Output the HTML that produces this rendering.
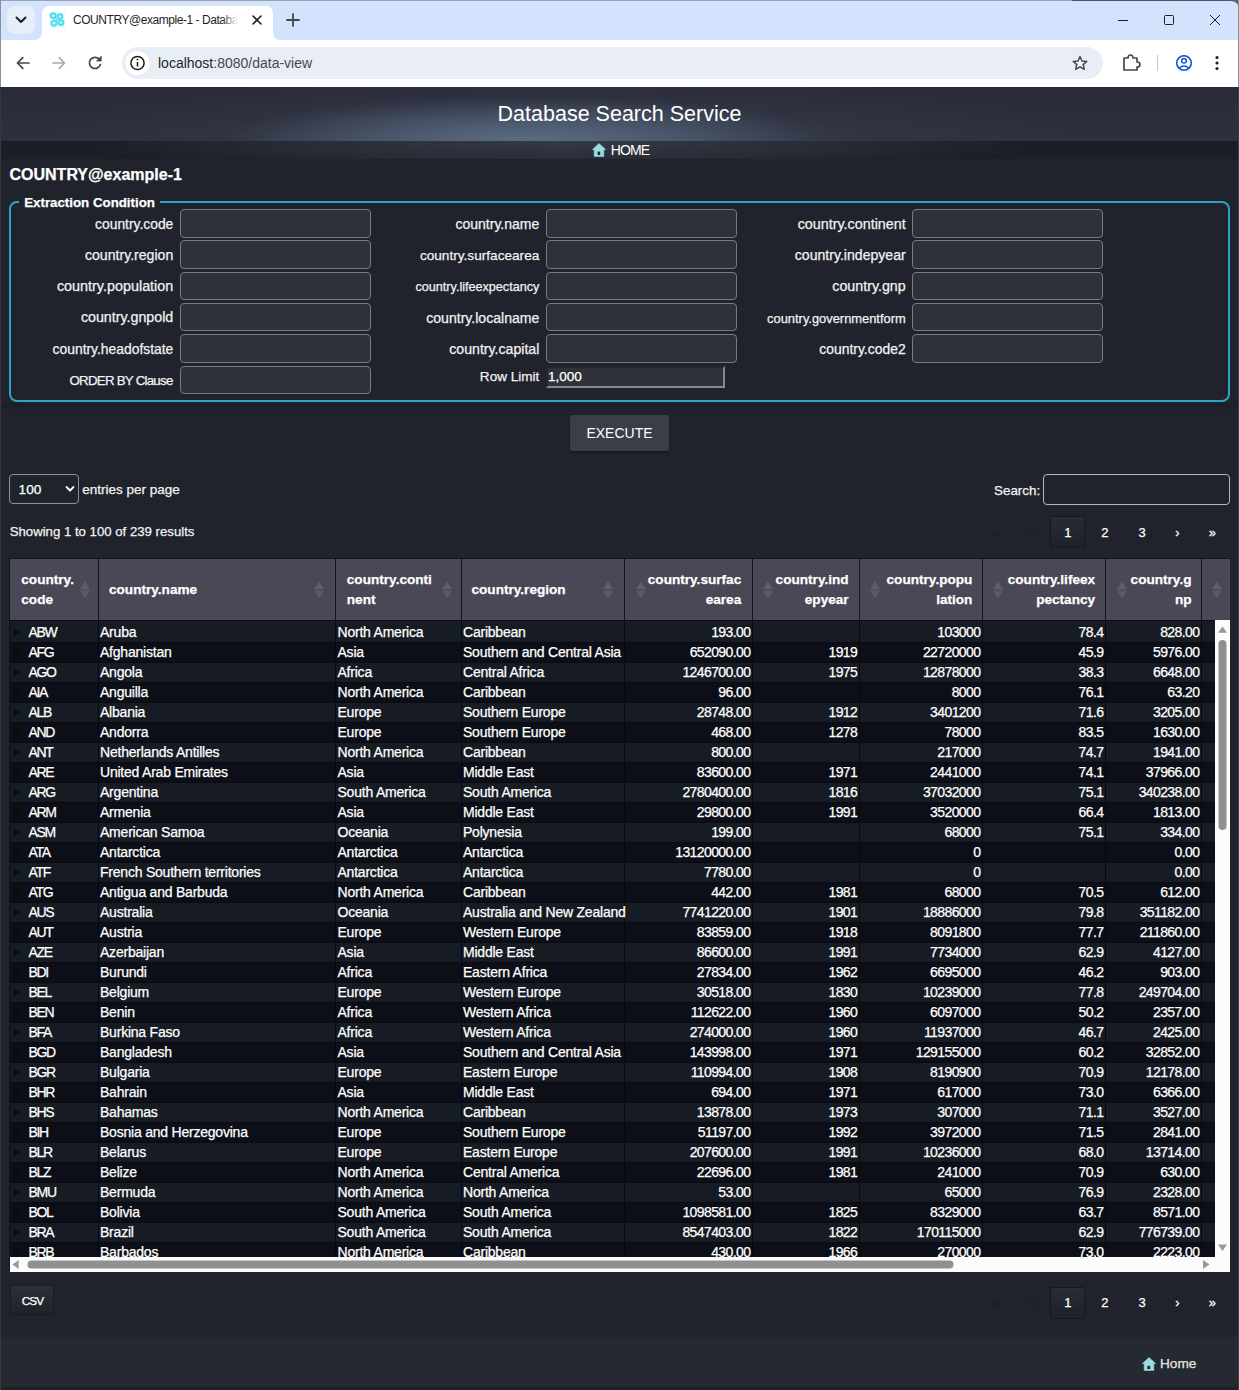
<!DOCTYPE html>
<html><head><meta charset="utf-8"><title>COUNTRY@example-1</title>
<style>
html,body{margin:0;padding:0;}
body{width:1239px;height:1390px;overflow:hidden;position:relative;background:#20232c;font-family:"Liberation Sans", sans-serif;}
.t{position:absolute;white-space:nowrap;-webkit-text-stroke:0.25px currentColor;}
.b{position:absolute;box-sizing:border-box;}
svg{position:absolute;overflow:visible;}
</style></head><body>
<div class="b" style="left:0px;top:0px;width:1239px;height:87px;background:#ffffff;"></div>
<div class="b" style="left:0px;top:0px;width:1239px;height:40px;background:#d3e3fd;"></div>
<div class="b" style="left:0px;top:0px;width:1239px;height:1px;background:#9aa3ad;"></div>
<div class="b" style="left:1072px;top:0px;width:167px;height:1px;background:#4a5568;"></div>
<svg style="left:1229px;top:0" width="10" height="10" viewBox="0 0 10 10"><path d="M0 0 L10 0 L10 10 Q10 1 1 1 Z" fill="#5a6577"/></svg>
<div class="b" style="left:0px;top:0px;width:1px;height:87px;background:#8a9098;"></div>
<div class="b" style="left:0px;top:87px;width:1.3px;height:1303px;background:#34373d;"></div>
<div class="b" style="left:1238px;top:0px;width:1px;height:87px;background:#8a9098;"></div>
<div class="b" style="left:1237.5px;top:87px;width:1.5px;height:1303px;background:#3a3d44;"></div>
<div class="b" style="left:7px;top:6px;width:28px;height:28px;background:#e8eef9;border-radius:8px;"></div>
<svg style="left:0;top:0" width="300" height="40" viewBox="0 0 300 40"><path d="M16.5 17.5 L21 22 L25.5 17.5" fill="none" stroke="#1f1f1f" stroke-width="2" stroke-linecap="round" stroke-linejoin="round"/></svg>
<svg style="left:0;top:0" width="320" height="41" viewBox="0 0 320 41"><path d="M34 40 Q42 40 42 32 L42 14 Q42 6 50 6 L265 6 Q273 6 273 14 L273 32 Q273 40 281 40 Z" fill="#ffffff"/></svg>
<svg style="left:49px;top:12px" width="16" height="16" viewBox="0 0 16 16"><rect x="0" y="0" width="16" height="16" fill="#dff6fb" opacity="0.6"/><circle cx="4.2" cy="3.8" r="2.4" fill="none" stroke="#4fdcf0" stroke-width="2.2"/><circle cx="11" cy="4.6" r="2.3" fill="none" stroke="#4fdcf0" stroke-width="2.2"/><circle cx="5" cy="11.2" r="2.5" fill="none" stroke="#4fdcf0" stroke-width="2.2"/><circle cx="12" cy="10.6" r="2.3" fill="none" stroke="#4fdcf0" stroke-width="2.2"/><path d="M6.5 6 L9 8.5" stroke="#4fdcf0" stroke-width="1.2"/></svg>
<div class="t" style="top:12.44px;height:16px;line-height:16px;font-size:12px;color:#1f1f1f;left:73.00px;-webkit-text-stroke:0;letter-spacing:-0.45px;">COUNTRY@example-1 - Databa</div>
<div class="b" style="left:222px;top:10px;width:20px;height:22px;background:linear-gradient(90deg,rgba(255,255,255,0),#fff 80%);"></div>
<svg style="left:0;top:0" width="320" height="40" viewBox="0 0 320 40"><path d="M253 16 L261 24 M261 16 L253 24" stroke="#1f1f1f" stroke-width="1.6" stroke-linecap="round"/><path d="M293 14 L293 26 M287 20 L299 20" stroke="#474747" stroke-width="1.8" stroke-linecap="round"/></svg>
<svg style="left:1100px;top:0" width="139" height="40" viewBox="1100 0 139 40"><path d="M1118 20.5 L1128 20.5" stroke="#1f1f1f" stroke-width="1"/><rect x="1164.5" y="15.5" width="9" height="9" rx="1" fill="none" stroke="#1f1f1f" stroke-width="1"/><path d="M1210 15 L1220 25 M1220 15 L1210 25" stroke="#1f1f1f" stroke-width="1"/></svg>
<div class="b" style="left:122px;top:47px;width:981px;height:32px;background:#e9eef6;border-radius:16px;"></div>
<svg style="left:0;top:40px" width="1239" height="47" viewBox="0 40 1239 47"><path d="M29 63 L17.5 63 M22.8 57.6 L17.4 63 L22.8 68.4" fill="none" stroke="#474747" stroke-width="1.7" stroke-linecap="round" stroke-linejoin="round"/><path d="M53 63 L64.5 63 M59.2 57.6 L64.6 63 L59.2 68.4" fill="none" stroke="#ababab" stroke-width="1.7" stroke-linecap="round" stroke-linejoin="round"/><path d="M99.6 59.6 A5.6 5.6 0 1 0 100.4 64.6" fill="none" stroke="#474747" stroke-width="1.7" stroke-linecap="round"/><path d="M101.2 56.3 L101.2 61 L96.6 61 Z" fill="#474747" stroke="#474747" stroke-width="0.8" stroke-linejoin="round"/><circle cx="137.5" cy="63" r="12" fill="#ffffff"/><circle cx="137.5" cy="63" r="6.6" fill="none" stroke="#1f1f1f" stroke-width="1.5"/><path d="M137.5 62 L137.5 66.5" stroke="#1f1f1f" stroke-width="1.6"/><circle cx="137.5" cy="59.6" r="0.95" fill="#1f1f1f"/><path d="M1080 56.5 L1082 61 L1086.8 61.4 L1083.2 64.6 L1084.3 69.3 L1080 66.8 L1075.7 69.3 L1076.8 64.6 L1073.2 61.4 L1078 61 Z" fill="none" stroke="#474747" stroke-width="1.5" stroke-linejoin="round"/><path d="M1124 58 L1128 58 Q1128 55 1130.5 55 Q1133 55 1133 58 L1137 58 L1137 62 Q1140 62 1140 64.5 Q1140 67 1137 67 L1137 70 L1124 70 Z" fill="none" stroke="#474747" stroke-width="1.7" stroke-linejoin="round"/><path d="M1157.5 55 L1157.5 71" stroke="#c7c7c7" stroke-width="1"/><circle cx="1184" cy="63" r="7.3" fill="none" stroke="#0b57d0" stroke-width="1.6"/><circle cx="1184" cy="60.8" r="2.3" fill="none" stroke="#0b57d0" stroke-width="1.5"/><path d="M1179.3 68.2 Q1184 63.8 1188.7 68.2" fill="none" stroke="#0b57d0" stroke-width="1.5"/><circle cx="1217" cy="57.5" r="1.6" fill="#1f1f1f"/><circle cx="1217" cy="63" r="1.6" fill="#1f1f1f"/><circle cx="1217" cy="68.5" r="1.6" fill="#1f1f1f"/></svg>
<div class="t" style="top:53.95px;height:18px;line-height:18px;font-size:14px;color:#fff;left:158.00px;-webkit-text-stroke:0;"><span style="color:#1f1f1f">localhost</span><span style="color:#474747">:8080/data-view</span></div>
<div class="b" style="left:1px;top:87px;width:1237px;height:1303px;background:#20232c;"></div>
<div class="b" style="left:1px;top:87px;width:1237px;height:54px;background:radial-gradient(ellipse 300px 45px at 520px 54px, rgba(100,120,145,0.75), rgba(100,120,145,0) 100%), radial-gradient(ellipse 520px 75px at 560px 58px, rgba(70,84,105,0.8), rgba(55,62,80,0.3) 60%, rgba(43,45,58,0) 100%), linear-gradient(180deg,#2a2b38,#2e303d);"></div>
<div class="t" style="top:100.05px;height:28px;line-height:28px;font-size:21.5px;color:#ffffff;left:319.50px;width:600px;text-align:center;-webkit-text-stroke:0;">Database Search Service</div>
<div class="b" style="left:1px;top:141px;width:1237px;height:18px;background:radial-gradient(ellipse 480px 36px at 560px 0px, #343a46, #282c36 55%, #1c1e26 100%);"></div>
<svg style="left:592px;top:143px" width="14" height="14" viewBox="0 0 14 14"><path d="M7 0.6 L13.6 6.6 L11.8 6.6 L11.8 13.4 L2.2 13.4 L2.2 6.6 L0.4 6.6 Z" fill="#9bdcdf" stroke="#9bdcdf" stroke-width="0.6" stroke-linejoin="round"/><rect x="5.6" y="8.6" width="2.6" height="3.4" fill="#1d2a33"/></svg>
<div class="t" style="top:141.15px;height:18px;line-height:18px;font-size:14px;color:#ffffff;left:610.70px;-webkit-text-stroke:0;letter-spacing:-0.9px;">HOME</div>
<div class="t" style="top:164.15px;height:21px;line-height:21px;font-size:16px;color:#ffffff;font-weight:700;left:9.50px;">COUNTRY@example-1</div>
<div class="b" style="left:9px;top:201px;width:1221px;height:201px;border:2px solid #2ba6c1;border-radius:8px;"></div>
<div class="b" style="left:19px;top:196px;width:141px;height:10px;background:#20232c;"></div>
<div class="t" style="top:193.69px;height:17px;line-height:17px;font-size:13.3px;color:#ffffff;font-weight:700;left:24.20px;">Extraction Condition</div>
<div class="t" style="top:215.30px;height:18px;line-height:18px;font-size:13.85840707964602px;color:#f2f2f2;right:1065.70px;text-align:right;">country.code</div>
<div class="b" style="left:180px;top:209.2px;width:191px;height:28.6px;background:#2e3139;border:1px solid #777b83;border-radius:4px;"></div>
<div class="t" style="top:246.40px;height:18px;line-height:18px;font-size:14.127708095781072px;color:#f2f2f2;right:1065.70px;text-align:right;">country.region</div>
<div class="b" style="left:180px;top:240.4px;width:191px;height:28.6px;background:#2e3139;border:1px solid #777b83;border-radius:4px;"></div>
<div class="t" style="top:277.01px;height:19px;line-height:19px;font-size:14.39506172839506px;color:#f2f2f2;right:1065.70px;text-align:right;">country.population</div>
<div class="b" style="left:180px;top:271.6px;width:191px;height:28.6px;background:#2e3139;border:1px solid #777b83;border-radius:4px;"></div>
<div class="t" style="top:308.36px;height:19px;line-height:19px;font-size:14.262114537444935px;color:#f2f2f2;right:1065.70px;text-align:right;">country.gnpold</div>
<div class="b" style="left:180px;top:302.9px;width:191px;height:28.6px;background:#2e3139;border:1px solid #777b83;border-radius:4px;"></div>
<div class="t" style="top:340.39px;height:18px;line-height:18px;font-size:13.862182116488924px;color:#f2f2f2;right:1065.70px;text-align:right;">country.headofstate</div>
<div class="b" style="left:180px;top:334.3px;width:191px;height:28.6px;background:#2e3139;border:1px solid #777b83;border-radius:4px;"></div>
<div class="t" style="top:372.29px;height:17px;line-height:17px;font-size:13.3px;color:#f2f2f2;right:1066.45px;text-align:right;letter-spacing:-0.75px;">ORDER BY Clause</div>
<div class="b" style="left:180px;top:365.5px;width:191px;height:28.6px;background:#2e3139;border:1px solid #777b83;border-radius:4px;"></div>
<div class="t" style="top:215.23px;height:18px;line-height:18px;font-size:14.033412887828163px;color:#f2f2f2;right:699.70px;text-align:right;">country.name</div>
<div class="b" style="left:546px;top:209.2px;width:191px;height:28.6px;background:#2e3139;border:1px solid #777b83;border-radius:4px;"></div>
<div class="t" style="top:246.57px;height:18px;line-height:18px;font-size:13.646291768541156px;color:#f2f2f2;right:699.70px;text-align:right;">country.surfacearea</div>
<div class="b" style="left:546px;top:240.4px;width:191px;height:28.6px;background:#2e3139;border:1px solid #777b83;border-radius:4px;"></div>
<div class="t" style="top:279.12px;height:16px;line-height:16px;font-size:12.625454545454545px;color:#f2f2f2;right:699.70px;text-align:right;">country.lifeexpectancy</div>
<div class="b" style="left:546px;top:271.6px;width:191px;height:28.6px;background:#2e3139;border:1px solid #777b83;border-radius:4px;"></div>
<div class="t" style="top:308.92px;height:18px;line-height:18px;font-size:14.074600355239788px;color:#f2f2f2;right:699.70px;text-align:right;">country.localname</div>
<div class="b" style="left:546px;top:302.9px;width:191px;height:28.6px;background:#2e3139;border:1px solid #777b83;border-radius:4px;"></div>
<div class="t" style="top:340.30px;height:18px;line-height:18px;font-size:14.141255605381163px;color:#f2f2f2;right:699.70px;text-align:right;">country.capital</div>
<div class="b" style="left:546px;top:334.3px;width:191px;height:28.6px;background:#2e3139;border:1px solid #777b83;border-radius:4px;"></div>
<div class="t" style="top:367.80px;height:18px;line-height:18px;font-size:13.567479674796747px;color:#f2f2f2;right:699.70px;text-align:right;">Row Limit</div>
<div class="b" style="left:546.4px;top:366.4px;width:178.6px;height:21.4px;background:#2f3239;border-style:solid;border-width:2px;border-color:#24272d #86898e #86898e #24272d;"></div>
<div class="t" style="top:367.82px;height:18px;line-height:18px;font-size:13.5px;color:#ffffff;left:548.00px;">1,000</div>
<div class="t" style="top:214.63px;height:19px;line-height:19px;font-size:14.34469696969697px;color:#f2f2f2;right:333.30px;text-align:right;">country.continent</div>
<div class="b" style="left:912px;top:209.2px;width:191px;height:28.6px;background:#2e3139;border:1px solid #777b83;border-radius:4px;"></div>
<div class="t" style="top:246.42px;height:18px;line-height:18px;font-size:14.088929219600727px;color:#f2f2f2;right:333.30px;text-align:right;">country.indepyear</div>
<div class="b" style="left:912px;top:240.4px;width:191px;height:28.6px;background:#2e3139;border:1px solid #777b83;border-radius:4px;"></div>
<div class="t" style="top:277.06px;height:19px;line-height:19px;font-size:14.252427184466022px;color:#f2f2f2;right:333.30px;text-align:right;">country.gnp</div>
<div class="b" style="left:912px;top:271.6px;width:191px;height:28.6px;background:#2e3139;border:1px solid #777b83;border-radius:4px;"></div>
<div class="t" style="top:309.83px;height:17px;line-height:17px;font-size:12.885202388852022px;color:#f2f2f2;right:333.30px;text-align:right;">country.governmentform</div>
<div class="b" style="left:912px;top:302.9px;width:191px;height:28.6px;background:#2e3139;border:1px solid #777b83;border-radius:4px;"></div>
<div class="t" style="top:340.36px;height:18px;line-height:18px;font-size:13.951668584579975px;color:#f2f2f2;right:333.30px;text-align:right;">country.code2</div>
<div class="b" style="left:912px;top:334.3px;width:191px;height:28.6px;background:#2e3139;border:1px solid #777b83;border-radius:4px;"></div>
<div class="b" style="left:1px;top:403px;width:1237px;height:9px;background:linear-gradient(180deg,rgba(0,0,0,0.12),rgba(0,0,0,0));"></div>
<div class="b" style="left:570px;top:414.7px;width:99px;height:36.1px;background:#3b3e46;border-radius:2px;box-shadow:0 1px 2px rgba(0,0,0,0.45);"></div>
<div class="t" style="top:424.05px;height:18px;line-height:18px;font-size:14px;color:#ffffff;left:319.50px;width:600px;text-align:center;-webkit-text-stroke:0;">EXECUTE</div>
<div class="b" style="left:9.2px;top:474.2px;width:69.6px;height:30.3px;border:1px solid #8d9096;border-radius:4px;background:#1f232a;"></div>
<div class="t" style="top:481.18px;height:18px;line-height:18px;font-size:13.6px;color:#ffffff;left:18.60px;">100</div>
<svg style="left:64px;top:484px" width="12" height="10" viewBox="0 0 12 10"><path d="M2.5 3 L6 6.5 L9.5 3" fill="none" stroke="#ffffff" stroke-width="1.8" stroke-linecap="round" stroke-linejoin="round"/></svg>
<div class="t" style="top:481.22px;height:18px;line-height:18px;font-size:13.5px;color:#f2f2f2;left:82.30px;">entries per page</div>
<div class="t" style="top:482.15px;height:17px;line-height:17px;font-size:13.4px;color:#f2f2f2;right:198.80px;text-align:right;">Search:</div>
<div class="b" style="left:1043.1px;top:474.4px;width:186.7px;height:30.3px;border:1px solid #b4b7bc;border-radius:4px;background:#1f232a;"></div>
<div class="t" style="top:522.92px;height:17px;line-height:17px;font-size:13.2px;color:#f2f2f2;left:9.70px;">Showing 1 to 100 of 239 results</div>
<div class="b" style="left:1050px;top:516px;width:35px;height:32px;background:linear-gradient(180deg,#282c34,#1e2128);border:1px solid #16181d;border-radius:2px;"></div>
<div class="t" style="top:523.99px;height:17px;line-height:17px;font-size:13px;color:#1b1e25;left:696.70px;width:600px;text-align:center;">«</div>
<div class="t" style="top:523.99px;height:17px;line-height:17px;font-size:13px;color:#1b1e25;left:732.20px;width:600px;text-align:center;">‹</div>
<div class="t" style="top:523.99px;height:17px;line-height:17px;font-size:13px;color:#ffffff;left:767.90px;width:600px;text-align:center;">1</div>
<div class="t" style="top:523.99px;height:17px;line-height:17px;font-size:13px;color:#ffffff;left:804.90px;width:600px;text-align:center;">2</div>
<div class="t" style="top:523.99px;height:17px;line-height:17px;font-size:13px;color:#ffffff;left:842.00px;width:600px;text-align:center;">3</div>
<div class="t" style="top:523.99px;height:17px;line-height:17px;font-size:13px;color:#ffffff;left:877.50px;width:600px;text-align:center;">›</div>
<div class="t" style="top:523.99px;height:17px;line-height:17px;font-size:13px;color:#ffffff;left:912.30px;width:600px;text-align:center;">»</div>
<div class="b" style="left:9px;top:558px;width:1221.3px;height:1px;background:#14161b;"></div>
<div class="b" style="left:9.5px;top:559px;width:1220.8px;height:61px;background:#4a4756;"></div>
<div class="b" style="left:97.60000000000001px;top:559px;width:1.3px;height:61px;background:#121419;"></div>
<div class="b" style="left:334.59999999999997px;top:559px;width:1.3px;height:61px;background:#121419;"></div>
<div class="b" style="left:460.7px;top:559px;width:1.3px;height:61px;background:#121419;"></div>
<div class="b" style="left:623.9px;top:559px;width:1.3px;height:61px;background:#121419;"></div>
<div class="b" style="left:751.9px;top:559px;width:1.3px;height:61px;background:#121419;"></div>
<div class="b" style="left:858.9px;top:559px;width:1.3px;height:61px;background:#121419;"></div>
<div class="b" style="left:981.9px;top:559px;width:1.3px;height:61px;background:#121419;"></div>
<div class="b" style="left:1104.8000000000002px;top:559px;width:1.3px;height:61px;background:#121419;"></div>
<div class="b" style="left:1200.9px;top:559px;width:1.3px;height:61px;background:#121419;"></div>
<div class="b" style="left:9px;top:557px;width:1.2px;height:715px;background:#111318;"></div>
<div class="t" style="top:570.98px;height:18px;line-height:18px;font-size:13.6px;color:#ffffff;font-weight:700;left:21.30px;">country.</div>
<div class="t" style="top:590.78px;height:18px;line-height:18px;font-size:13.6px;color:#ffffff;font-weight:700;left:21.30px;">code</div>
<div class="t" style="top:580.78px;height:18px;line-height:18px;font-size:13.6px;color:#ffffff;font-weight:700;left:109.00px;">country.name</div>
<div class="t" style="top:570.98px;height:18px;line-height:18px;font-size:13.6px;color:#ffffff;font-weight:700;left:346.80px;">country.conti</div>
<div class="t" style="top:590.78px;height:18px;line-height:18px;font-size:13.6px;color:#ffffff;font-weight:700;left:346.80px;">nent</div>
<div class="t" style="top:580.78px;height:18px;line-height:18px;font-size:13.6px;color:#ffffff;font-weight:700;left:471.50px;">country.region</div>
<div class="t" style="top:570.98px;height:18px;line-height:18px;font-size:13.6px;color:#ffffff;font-weight:700;right:497.80px;text-align:right;">country.surfac</div>
<div class="t" style="top:590.78px;height:18px;line-height:18px;font-size:13.6px;color:#ffffff;font-weight:700;right:497.80px;text-align:right;">earea</div>
<div class="t" style="top:570.98px;height:18px;line-height:18px;font-size:13.6px;color:#ffffff;font-weight:700;right:390.40px;text-align:right;">country.ind</div>
<div class="t" style="top:590.78px;height:18px;line-height:18px;font-size:13.6px;color:#ffffff;font-weight:700;right:390.40px;text-align:right;">epyear</div>
<div class="t" style="top:570.98px;height:18px;line-height:18px;font-size:13.6px;color:#ffffff;font-weight:700;right:266.60px;text-align:right;">country.popu</div>
<div class="t" style="top:590.78px;height:18px;line-height:18px;font-size:13.6px;color:#ffffff;font-weight:700;right:266.60px;text-align:right;">lation</div>
<div class="t" style="top:570.98px;height:18px;line-height:18px;font-size:13.6px;color:#ffffff;font-weight:700;right:143.90px;text-align:right;">country.lifeex</div>
<div class="t" style="top:590.78px;height:18px;line-height:18px;font-size:13.6px;color:#ffffff;font-weight:700;right:143.90px;text-align:right;">pectancy</div>
<div class="t" style="top:570.98px;height:18px;line-height:18px;font-size:13.6px;color:#ffffff;font-weight:700;right:47.50px;text-align:right;">country.g</div>
<div class="t" style="top:590.78px;height:18px;line-height:18px;font-size:13.6px;color:#ffffff;font-weight:700;right:47.50px;text-align:right;">np</div>
<svg style="left:79.0px;top:579.5px" width="12" height="20" viewBox="0 0 12 20"><path d="M1 9.2 L6 1.5 L11 9.2 Z" fill="#615e6c"/><path d="M1 10.4 L6 18.5 L11 10.4 Z" fill="#5d5a68"/></svg>
<svg style="left:312.5px;top:579.5px" width="12" height="20" viewBox="0 0 12 20"><path d="M1 9.2 L6 1.5 L11 9.2 Z" fill="#615e6c"/><path d="M1 10.4 L6 18.5 L11 10.4 Z" fill="#5d5a68"/></svg>
<svg style="left:440.5px;top:579.5px" width="12" height="20" viewBox="0 0 12 20"><path d="M1 9.2 L6 1.5 L11 9.2 Z" fill="#615e6c"/><path d="M1 10.4 L6 18.5 L11 10.4 Z" fill="#5d5a68"/></svg>
<svg style="left:601.5px;top:579.5px" width="12" height="20" viewBox="0 0 12 20"><path d="M1 9.2 L6 1.5 L11 9.2 Z" fill="#615e6c"/><path d="M1 10.4 L6 18.5 L11 10.4 Z" fill="#5d5a68"/></svg>
<svg style="left:634.5px;top:579.5px" width="12" height="20" viewBox="0 0 12 20"><path d="M1 9.2 L6 1.5 L11 9.2 Z" fill="#615e6c"/><path d="M1 10.4 L6 18.5 L11 10.4 Z" fill="#5d5a68"/></svg>
<svg style="left:761.7px;top:579.5px" width="12" height="20" viewBox="0 0 12 20"><path d="M1 9.2 L6 1.5 L11 9.2 Z" fill="#615e6c"/><path d="M1 10.4 L6 18.5 L11 10.4 Z" fill="#5d5a68"/></svg>
<svg style="left:869.0px;top:579.5px" width="12" height="20" viewBox="0 0 12 20"><path d="M1 9.2 L6 1.5 L11 9.2 Z" fill="#615e6c"/><path d="M1 10.4 L6 18.5 L11 10.4 Z" fill="#5d5a68"/></svg>
<svg style="left:991.8px;top:579.5px" width="12" height="20" viewBox="0 0 12 20"><path d="M1 9.2 L6 1.5 L11 9.2 Z" fill="#615e6c"/><path d="M1 10.4 L6 18.5 L11 10.4 Z" fill="#5d5a68"/></svg>
<svg style="left:1115.7px;top:579.5px" width="12" height="20" viewBox="0 0 12 20"><path d="M1 9.2 L6 1.5 L11 9.2 Z" fill="#615e6c"/><path d="M1 10.4 L6 18.5 L11 10.4 Z" fill="#5d5a68"/></svg>
<svg style="left:1211.4px;top:579.5px" width="12" height="20" viewBox="0 0 12 20"><path d="M1 9.2 L6 1.5 L11 9.2 Z" fill="#615e6c"/><path d="M1 10.4 L6 18.5 L11 10.4 Z" fill="#5d5a68"/></svg>
<div class="b" style="left:9.5px;top:620px;width:1205.5px;height:637px;overflow:hidden;background:#0c0f16;">
<div class="b" style="left:0;top:0px;width:1205.5px;height:22px;background:#171b23;border-top:1px solid #090b10;"></div>
<div class="b" style="left:0;top:22px;width:1205.5px;height:20px;background:#0c0f17;border-top:1px solid #090b10;"></div>
<div class="b" style="left:0;top:42px;width:1205.5px;height:20px;background:#171b23;border-top:1px solid #090b10;"></div>
<div class="b" style="left:0;top:62px;width:1205.5px;height:20px;background:#0c0f17;border-top:1px solid #090b10;"></div>
<div class="b" style="left:0;top:82px;width:1205.5px;height:20px;background:#171b23;border-top:1px solid #090b10;"></div>
<div class="b" style="left:0;top:102px;width:1205.5px;height:20px;background:#0c0f17;border-top:1px solid #090b10;"></div>
<div class="b" style="left:0;top:122px;width:1205.5px;height:20px;background:#171b23;border-top:1px solid #090b10;"></div>
<div class="b" style="left:0;top:142px;width:1205.5px;height:20px;background:#0c0f17;border-top:1px solid #090b10;"></div>
<div class="b" style="left:0;top:162px;width:1205.5px;height:20px;background:#171b23;border-top:1px solid #090b10;"></div>
<div class="b" style="left:0;top:182px;width:1205.5px;height:20px;background:#0c0f17;border-top:1px solid #090b10;"></div>
<div class="b" style="left:0;top:202px;width:1205.5px;height:20px;background:#171b23;border-top:1px solid #090b10;"></div>
<div class="b" style="left:0;top:222px;width:1205.5px;height:20px;background:#0c0f17;border-top:1px solid #090b10;"></div>
<div class="b" style="left:0;top:242px;width:1205.5px;height:20px;background:#171b23;border-top:1px solid #090b10;"></div>
<div class="b" style="left:0;top:262px;width:1205.5px;height:20px;background:#0c0f17;border-top:1px solid #090b10;"></div>
<div class="b" style="left:0;top:282px;width:1205.5px;height:20px;background:#171b23;border-top:1px solid #090b10;"></div>
<div class="b" style="left:0;top:302px;width:1205.5px;height:20px;background:#0c0f17;border-top:1px solid #090b10;"></div>
<div class="b" style="left:0;top:322px;width:1205.5px;height:20px;background:#171b23;border-top:1px solid #090b10;"></div>
<div class="b" style="left:0;top:342px;width:1205.5px;height:20px;background:#0c0f17;border-top:1px solid #090b10;"></div>
<div class="b" style="left:0;top:362px;width:1205.5px;height:20px;background:#171b23;border-top:1px solid #090b10;"></div>
<div class="b" style="left:0;top:382px;width:1205.5px;height:20px;background:#0c0f17;border-top:1px solid #090b10;"></div>
<div class="b" style="left:0;top:402px;width:1205.5px;height:20px;background:#171b23;border-top:1px solid #090b10;"></div>
<div class="b" style="left:0;top:422px;width:1205.5px;height:20px;background:#0c0f17;border-top:1px solid #090b10;"></div>
<div class="b" style="left:0;top:442px;width:1205.5px;height:20px;background:#171b23;border-top:1px solid #090b10;"></div>
<div class="b" style="left:0;top:462px;width:1205.5px;height:20px;background:#0c0f17;border-top:1px solid #090b10;"></div>
<div class="b" style="left:0;top:482px;width:1205.5px;height:20px;background:#171b23;border-top:1px solid #090b10;"></div>
<div class="b" style="left:0;top:502px;width:1205.5px;height:20px;background:#0c0f17;border-top:1px solid #090b10;"></div>
<div class="b" style="left:0;top:522px;width:1205.5px;height:20px;background:#171b23;border-top:1px solid #090b10;"></div>
<div class="b" style="left:0;top:542px;width:1205.5px;height:20px;background:#0c0f17;border-top:1px solid #090b10;"></div>
<div class="b" style="left:0;top:562px;width:1205.5px;height:20px;background:#171b23;border-top:1px solid #090b10;"></div>
<div class="b" style="left:0;top:582px;width:1205.5px;height:20px;background:#0c0f17;border-top:1px solid #090b10;"></div>
<div class="b" style="left:0;top:602px;width:1205.5px;height:20px;background:#171b23;border-top:1px solid #090b10;"></div>
<div class="b" style="left:0;top:622px;width:1205.5px;height:20px;background:#0c0f17;border-top:1px solid #090b10;"></div>
<div class="b" style="left:88.10px;top:0;width:1.2px;height:637px;background:#07090d;"></div>
<div class="b" style="left:325.10px;top:0;width:1.2px;height:637px;background:#07090d;"></div>
<div class="b" style="left:451.20px;top:0;width:1.2px;height:637px;background:#07090d;"></div>
<div class="b" style="left:614.40px;top:0;width:1.2px;height:637px;background:#07090d;"></div>
<div class="b" style="left:742.40px;top:0;width:1.2px;height:637px;background:#07090d;"></div>
<div class="b" style="left:849.40px;top:0;width:1.2px;height:637px;background:#07090d;"></div>
<div class="b" style="left:972.40px;top:0;width:1.2px;height:637px;background:#07090d;"></div>
<div class="b" style="left:1095.30px;top:0;width:1.2px;height:637px;background:#07090d;"></div>
<div class="b" style="left:1191.40px;top:0;width:1.2px;height:637px;background:#07090d;"></div>
</div>
<div class="b" style="left:0;top:620px;width:1215px;height:637px;overflow:hidden;">
<div class="t" style="top:1.95px;height:20px;line-height:20px;font-size:14px;color:#ffffff;letter-spacing:-1.35px;left:28.60px;">ABW</div><div class="t" style="top:1.95px;height:20px;line-height:20px;font-size:14px;color:#ffffff;letter-spacing:-0.22px;left:100.00px;">Aruba</div><div class="t" style="top:1.95px;height:20px;line-height:20px;font-size:14px;color:#ffffff;letter-spacing:-0.22px;left:337.50px;">North America</div><div class="t" style="top:1.95px;height:20px;line-height:20px;font-size:14px;color:#ffffff;letter-spacing:-0.22px;left:463.00px;">Caribbean</div><div class="t" style="top:1.95px;height:20px;line-height:20px;font-size:14px;color:#ffffff;letter-spacing:-0.6px;right:464.60px;text-align:right;">193.00</div><div class="t" style="top:1.95px;height:20px;line-height:20px;font-size:14px;color:#ffffff;letter-spacing:-0.6px;right:234.60px;text-align:right;">103000</div><div class="t" style="top:1.95px;height:20px;line-height:20px;font-size:14px;color:#ffffff;letter-spacing:-0.6px;right:111.60px;text-align:right;">78.4</div><div class="t" style="top:1.95px;height:20px;line-height:20px;font-size:14px;color:#ffffff;letter-spacing:-0.6px;right:15.60px;text-align:right;">828.00</div><svg style="left:13px;top:7.8px" width="8" height="9" viewBox="0 0 8 9"><path d="M0.5 0.5 L7.5 4.5 L0.5 8.5 Z" fill="#090b10" opacity="0.9"/></svg><div class="t" style="top:21.95px;height:20px;line-height:20px;font-size:14px;color:#ffffff;letter-spacing:-1.35px;left:28.60px;">AFG</div><div class="t" style="top:21.95px;height:20px;line-height:20px;font-size:14px;color:#ffffff;letter-spacing:-0.22px;left:100.00px;">Afghanistan</div><div class="t" style="top:21.95px;height:20px;line-height:20px;font-size:14px;color:#ffffff;letter-spacing:-0.22px;left:337.50px;">Asia</div><div class="t" style="top:21.95px;height:20px;line-height:20px;font-size:14px;color:#ffffff;letter-spacing:-0.22px;left:463.00px;">Southern and Central Asia</div><div class="t" style="top:21.95px;height:20px;line-height:20px;font-size:14px;color:#ffffff;letter-spacing:-0.6px;right:464.60px;text-align:right;">652090.00</div><div class="t" style="top:21.95px;height:20px;line-height:20px;font-size:14px;color:#ffffff;letter-spacing:-0.6px;right:357.80px;text-align:right;">1919</div><div class="t" style="top:21.95px;height:20px;line-height:20px;font-size:14px;color:#ffffff;letter-spacing:-0.6px;right:234.60px;text-align:right;">22720000</div><div class="t" style="top:21.95px;height:20px;line-height:20px;font-size:14px;color:#ffffff;letter-spacing:-0.6px;right:111.60px;text-align:right;">45.9</div><div class="t" style="top:21.95px;height:20px;line-height:20px;font-size:14px;color:#ffffff;letter-spacing:-0.6px;right:15.60px;text-align:right;">5976.00</div><svg style="left:13px;top:27.8px" width="8" height="9" viewBox="0 0 8 9"><path d="M0.5 0.5 L7.5 4.5 L0.5 8.5 Z" fill="#090b10" opacity="0.9"/></svg><div class="t" style="top:41.95px;height:20px;line-height:20px;font-size:14px;color:#ffffff;letter-spacing:-1.35px;left:28.60px;">AGO</div><div class="t" style="top:41.95px;height:20px;line-height:20px;font-size:14px;color:#ffffff;letter-spacing:-0.22px;left:100.00px;">Angola</div><div class="t" style="top:41.95px;height:20px;line-height:20px;font-size:14px;color:#ffffff;letter-spacing:-0.22px;left:337.50px;">Africa</div><div class="t" style="top:41.95px;height:20px;line-height:20px;font-size:14px;color:#ffffff;letter-spacing:-0.22px;left:463.00px;">Central Africa</div><div class="t" style="top:41.95px;height:20px;line-height:20px;font-size:14px;color:#ffffff;letter-spacing:-0.6px;right:464.60px;text-align:right;">1246700.00</div><div class="t" style="top:41.95px;height:20px;line-height:20px;font-size:14px;color:#ffffff;letter-spacing:-0.6px;right:357.80px;text-align:right;">1975</div><div class="t" style="top:41.95px;height:20px;line-height:20px;font-size:14px;color:#ffffff;letter-spacing:-0.6px;right:234.60px;text-align:right;">12878000</div><div class="t" style="top:41.95px;height:20px;line-height:20px;font-size:14px;color:#ffffff;letter-spacing:-0.6px;right:111.60px;text-align:right;">38.3</div><div class="t" style="top:41.95px;height:20px;line-height:20px;font-size:14px;color:#ffffff;letter-spacing:-0.6px;right:15.60px;text-align:right;">6648.00</div><svg style="left:13px;top:47.8px" width="8" height="9" viewBox="0 0 8 9"><path d="M0.5 0.5 L7.5 4.5 L0.5 8.5 Z" fill="#090b10" opacity="0.9"/></svg><div class="t" style="top:61.95px;height:20px;line-height:20px;font-size:14px;color:#ffffff;letter-spacing:-1.35px;left:28.60px;">AIA</div><div class="t" style="top:61.95px;height:20px;line-height:20px;font-size:14px;color:#ffffff;letter-spacing:-0.22px;left:100.00px;">Anguilla</div><div class="t" style="top:61.95px;height:20px;line-height:20px;font-size:14px;color:#ffffff;letter-spacing:-0.22px;left:337.50px;">North America</div><div class="t" style="top:61.95px;height:20px;line-height:20px;font-size:14px;color:#ffffff;letter-spacing:-0.22px;left:463.00px;">Caribbean</div><div class="t" style="top:61.95px;height:20px;line-height:20px;font-size:14px;color:#ffffff;letter-spacing:-0.6px;right:464.60px;text-align:right;">96.00</div><div class="t" style="top:61.95px;height:20px;line-height:20px;font-size:14px;color:#ffffff;letter-spacing:-0.6px;right:234.60px;text-align:right;">8000</div><div class="t" style="top:61.95px;height:20px;line-height:20px;font-size:14px;color:#ffffff;letter-spacing:-0.6px;right:111.60px;text-align:right;">76.1</div><div class="t" style="top:61.95px;height:20px;line-height:20px;font-size:14px;color:#ffffff;letter-spacing:-0.6px;right:15.60px;text-align:right;">63.20</div><svg style="left:13px;top:67.8px" width="8" height="9" viewBox="0 0 8 9"><path d="M0.5 0.5 L7.5 4.5 L0.5 8.5 Z" fill="#090b10" opacity="0.9"/></svg><div class="t" style="top:81.95px;height:20px;line-height:20px;font-size:14px;color:#ffffff;letter-spacing:-1.35px;left:28.60px;">ALB</div><div class="t" style="top:81.95px;height:20px;line-height:20px;font-size:14px;color:#ffffff;letter-spacing:-0.22px;left:100.00px;">Albania</div><div class="t" style="top:81.95px;height:20px;line-height:20px;font-size:14px;color:#ffffff;letter-spacing:-0.22px;left:337.50px;">Europe</div><div class="t" style="top:81.95px;height:20px;line-height:20px;font-size:14px;color:#ffffff;letter-spacing:-0.22px;left:463.00px;">Southern Europe</div><div class="t" style="top:81.95px;height:20px;line-height:20px;font-size:14px;color:#ffffff;letter-spacing:-0.6px;right:464.60px;text-align:right;">28748.00</div><div class="t" style="top:81.95px;height:20px;line-height:20px;font-size:14px;color:#ffffff;letter-spacing:-0.6px;right:357.80px;text-align:right;">1912</div><div class="t" style="top:81.95px;height:20px;line-height:20px;font-size:14px;color:#ffffff;letter-spacing:-0.6px;right:234.60px;text-align:right;">3401200</div><div class="t" style="top:81.95px;height:20px;line-height:20px;font-size:14px;color:#ffffff;letter-spacing:-0.6px;right:111.60px;text-align:right;">71.6</div><div class="t" style="top:81.95px;height:20px;line-height:20px;font-size:14px;color:#ffffff;letter-spacing:-0.6px;right:15.60px;text-align:right;">3205.00</div><svg style="left:13px;top:87.8px" width="8" height="9" viewBox="0 0 8 9"><path d="M0.5 0.5 L7.5 4.5 L0.5 8.5 Z" fill="#090b10" opacity="0.9"/></svg><div class="t" style="top:101.95px;height:20px;line-height:20px;font-size:14px;color:#ffffff;letter-spacing:-1.35px;left:28.60px;">AND</div><div class="t" style="top:101.95px;height:20px;line-height:20px;font-size:14px;color:#ffffff;letter-spacing:-0.22px;left:100.00px;">Andorra</div><div class="t" style="top:101.95px;height:20px;line-height:20px;font-size:14px;color:#ffffff;letter-spacing:-0.22px;left:337.50px;">Europe</div><div class="t" style="top:101.95px;height:20px;line-height:20px;font-size:14px;color:#ffffff;letter-spacing:-0.22px;left:463.00px;">Southern Europe</div><div class="t" style="top:101.95px;height:20px;line-height:20px;font-size:14px;color:#ffffff;letter-spacing:-0.6px;right:464.60px;text-align:right;">468.00</div><div class="t" style="top:101.95px;height:20px;line-height:20px;font-size:14px;color:#ffffff;letter-spacing:-0.6px;right:357.80px;text-align:right;">1278</div><div class="t" style="top:101.95px;height:20px;line-height:20px;font-size:14px;color:#ffffff;letter-spacing:-0.6px;right:234.60px;text-align:right;">78000</div><div class="t" style="top:101.95px;height:20px;line-height:20px;font-size:14px;color:#ffffff;letter-spacing:-0.6px;right:111.60px;text-align:right;">83.5</div><div class="t" style="top:101.95px;height:20px;line-height:20px;font-size:14px;color:#ffffff;letter-spacing:-0.6px;right:15.60px;text-align:right;">1630.00</div><svg style="left:13px;top:107.8px" width="8" height="9" viewBox="0 0 8 9"><path d="M0.5 0.5 L7.5 4.5 L0.5 8.5 Z" fill="#090b10" opacity="0.9"/></svg><div class="t" style="top:121.95px;height:20px;line-height:20px;font-size:14px;color:#ffffff;letter-spacing:-1.35px;left:28.60px;">ANT</div><div class="t" style="top:121.95px;height:20px;line-height:20px;font-size:14px;color:#ffffff;letter-spacing:-0.22px;left:100.00px;">Netherlands Antilles</div><div class="t" style="top:121.95px;height:20px;line-height:20px;font-size:14px;color:#ffffff;letter-spacing:-0.22px;left:337.50px;">North America</div><div class="t" style="top:121.95px;height:20px;line-height:20px;font-size:14px;color:#ffffff;letter-spacing:-0.22px;left:463.00px;">Caribbean</div><div class="t" style="top:121.95px;height:20px;line-height:20px;font-size:14px;color:#ffffff;letter-spacing:-0.6px;right:464.60px;text-align:right;">800.00</div><div class="t" style="top:121.95px;height:20px;line-height:20px;font-size:14px;color:#ffffff;letter-spacing:-0.6px;right:234.60px;text-align:right;">217000</div><div class="t" style="top:121.95px;height:20px;line-height:20px;font-size:14px;color:#ffffff;letter-spacing:-0.6px;right:111.60px;text-align:right;">74.7</div><div class="t" style="top:121.95px;height:20px;line-height:20px;font-size:14px;color:#ffffff;letter-spacing:-0.6px;right:15.60px;text-align:right;">1941.00</div><svg style="left:13px;top:127.8px" width="8" height="9" viewBox="0 0 8 9"><path d="M0.5 0.5 L7.5 4.5 L0.5 8.5 Z" fill="#090b10" opacity="0.9"/></svg><div class="t" style="top:141.95px;height:20px;line-height:20px;font-size:14px;color:#ffffff;letter-spacing:-1.35px;left:28.60px;">ARE</div><div class="t" style="top:141.95px;height:20px;line-height:20px;font-size:14px;color:#ffffff;letter-spacing:-0.22px;left:100.00px;">United Arab Emirates</div><div class="t" style="top:141.95px;height:20px;line-height:20px;font-size:14px;color:#ffffff;letter-spacing:-0.22px;left:337.50px;">Asia</div><div class="t" style="top:141.95px;height:20px;line-height:20px;font-size:14px;color:#ffffff;letter-spacing:-0.22px;left:463.00px;">Middle East</div><div class="t" style="top:141.95px;height:20px;line-height:20px;font-size:14px;color:#ffffff;letter-spacing:-0.6px;right:464.60px;text-align:right;">83600.00</div><div class="t" style="top:141.95px;height:20px;line-height:20px;font-size:14px;color:#ffffff;letter-spacing:-0.6px;right:357.80px;text-align:right;">1971</div><div class="t" style="top:141.95px;height:20px;line-height:20px;font-size:14px;color:#ffffff;letter-spacing:-0.6px;right:234.60px;text-align:right;">2441000</div><div class="t" style="top:141.95px;height:20px;line-height:20px;font-size:14px;color:#ffffff;letter-spacing:-0.6px;right:111.60px;text-align:right;">74.1</div><div class="t" style="top:141.95px;height:20px;line-height:20px;font-size:14px;color:#ffffff;letter-spacing:-0.6px;right:15.60px;text-align:right;">37966.00</div><svg style="left:13px;top:147.8px" width="8" height="9" viewBox="0 0 8 9"><path d="M0.5 0.5 L7.5 4.5 L0.5 8.5 Z" fill="#090b10" opacity="0.9"/></svg><div class="t" style="top:161.95px;height:20px;line-height:20px;font-size:14px;color:#ffffff;letter-spacing:-1.35px;left:28.60px;">ARG</div><div class="t" style="top:161.95px;height:20px;line-height:20px;font-size:14px;color:#ffffff;letter-spacing:-0.22px;left:100.00px;">Argentina</div><div class="t" style="top:161.95px;height:20px;line-height:20px;font-size:14px;color:#ffffff;letter-spacing:-0.22px;left:337.50px;">South America</div><div class="t" style="top:161.95px;height:20px;line-height:20px;font-size:14px;color:#ffffff;letter-spacing:-0.22px;left:463.00px;">South America</div><div class="t" style="top:161.95px;height:20px;line-height:20px;font-size:14px;color:#ffffff;letter-spacing:-0.6px;right:464.60px;text-align:right;">2780400.00</div><div class="t" style="top:161.95px;height:20px;line-height:20px;font-size:14px;color:#ffffff;letter-spacing:-0.6px;right:357.80px;text-align:right;">1816</div><div class="t" style="top:161.95px;height:20px;line-height:20px;font-size:14px;color:#ffffff;letter-spacing:-0.6px;right:234.60px;text-align:right;">37032000</div><div class="t" style="top:161.95px;height:20px;line-height:20px;font-size:14px;color:#ffffff;letter-spacing:-0.6px;right:111.60px;text-align:right;">75.1</div><div class="t" style="top:161.95px;height:20px;line-height:20px;font-size:14px;color:#ffffff;letter-spacing:-0.6px;right:15.60px;text-align:right;">340238.00</div><svg style="left:13px;top:167.8px" width="8" height="9" viewBox="0 0 8 9"><path d="M0.5 0.5 L7.5 4.5 L0.5 8.5 Z" fill="#090b10" opacity="0.9"/></svg><div class="t" style="top:181.95px;height:20px;line-height:20px;font-size:14px;color:#ffffff;letter-spacing:-1.35px;left:28.60px;">ARM</div><div class="t" style="top:181.95px;height:20px;line-height:20px;font-size:14px;color:#ffffff;letter-spacing:-0.22px;left:100.00px;">Armenia</div><div class="t" style="top:181.95px;height:20px;line-height:20px;font-size:14px;color:#ffffff;letter-spacing:-0.22px;left:337.50px;">Asia</div><div class="t" style="top:181.95px;height:20px;line-height:20px;font-size:14px;color:#ffffff;letter-spacing:-0.22px;left:463.00px;">Middle East</div><div class="t" style="top:181.95px;height:20px;line-height:20px;font-size:14px;color:#ffffff;letter-spacing:-0.6px;right:464.60px;text-align:right;">29800.00</div><div class="t" style="top:181.95px;height:20px;line-height:20px;font-size:14px;color:#ffffff;letter-spacing:-0.6px;right:357.80px;text-align:right;">1991</div><div class="t" style="top:181.95px;height:20px;line-height:20px;font-size:14px;color:#ffffff;letter-spacing:-0.6px;right:234.60px;text-align:right;">3520000</div><div class="t" style="top:181.95px;height:20px;line-height:20px;font-size:14px;color:#ffffff;letter-spacing:-0.6px;right:111.60px;text-align:right;">66.4</div><div class="t" style="top:181.95px;height:20px;line-height:20px;font-size:14px;color:#ffffff;letter-spacing:-0.6px;right:15.60px;text-align:right;">1813.00</div><svg style="left:13px;top:187.8px" width="8" height="9" viewBox="0 0 8 9"><path d="M0.5 0.5 L7.5 4.5 L0.5 8.5 Z" fill="#090b10" opacity="0.9"/></svg><div class="t" style="top:201.95px;height:20px;line-height:20px;font-size:14px;color:#ffffff;letter-spacing:-1.35px;left:28.60px;">ASM</div><div class="t" style="top:201.95px;height:20px;line-height:20px;font-size:14px;color:#ffffff;letter-spacing:-0.22px;left:100.00px;">American Samoa</div><div class="t" style="top:201.95px;height:20px;line-height:20px;font-size:14px;color:#ffffff;letter-spacing:-0.22px;left:337.50px;">Oceania</div><div class="t" style="top:201.95px;height:20px;line-height:20px;font-size:14px;color:#ffffff;letter-spacing:-0.22px;left:463.00px;">Polynesia</div><div class="t" style="top:201.95px;height:20px;line-height:20px;font-size:14px;color:#ffffff;letter-spacing:-0.6px;right:464.60px;text-align:right;">199.00</div><div class="t" style="top:201.95px;height:20px;line-height:20px;font-size:14px;color:#ffffff;letter-spacing:-0.6px;right:234.60px;text-align:right;">68000</div><div class="t" style="top:201.95px;height:20px;line-height:20px;font-size:14px;color:#ffffff;letter-spacing:-0.6px;right:111.60px;text-align:right;">75.1</div><div class="t" style="top:201.95px;height:20px;line-height:20px;font-size:14px;color:#ffffff;letter-spacing:-0.6px;right:15.60px;text-align:right;">334.00</div><svg style="left:13px;top:207.8px" width="8" height="9" viewBox="0 0 8 9"><path d="M0.5 0.5 L7.5 4.5 L0.5 8.5 Z" fill="#090b10" opacity="0.9"/></svg><div class="t" style="top:221.95px;height:20px;line-height:20px;font-size:14px;color:#ffffff;letter-spacing:-1.35px;left:28.60px;">ATA</div><div class="t" style="top:221.95px;height:20px;line-height:20px;font-size:14px;color:#ffffff;letter-spacing:-0.22px;left:100.00px;">Antarctica</div><div class="t" style="top:221.95px;height:20px;line-height:20px;font-size:14px;color:#ffffff;letter-spacing:-0.22px;left:337.50px;">Antarctica</div><div class="t" style="top:221.95px;height:20px;line-height:20px;font-size:14px;color:#ffffff;letter-spacing:-0.22px;left:463.00px;">Antarctica</div><div class="t" style="top:221.95px;height:20px;line-height:20px;font-size:14px;color:#ffffff;letter-spacing:-0.6px;right:464.60px;text-align:right;">13120000.00</div><div class="t" style="top:221.95px;height:20px;line-height:20px;font-size:14px;color:#ffffff;letter-spacing:-0.6px;right:234.60px;text-align:right;">0</div><div class="t" style="top:221.95px;height:20px;line-height:20px;font-size:14px;color:#ffffff;letter-spacing:-0.6px;right:15.60px;text-align:right;">0.00</div><svg style="left:13px;top:227.8px" width="8" height="9" viewBox="0 0 8 9"><path d="M0.5 0.5 L7.5 4.5 L0.5 8.5 Z" fill="#090b10" opacity="0.9"/></svg><div class="t" style="top:241.95px;height:20px;line-height:20px;font-size:14px;color:#ffffff;letter-spacing:-1.35px;left:28.60px;">ATF</div><div class="t" style="top:241.95px;height:20px;line-height:20px;font-size:14px;color:#ffffff;letter-spacing:-0.22px;left:100.00px;">French Southern territories</div><div class="t" style="top:241.95px;height:20px;line-height:20px;font-size:14px;color:#ffffff;letter-spacing:-0.22px;left:337.50px;">Antarctica</div><div class="t" style="top:241.95px;height:20px;line-height:20px;font-size:14px;color:#ffffff;letter-spacing:-0.22px;left:463.00px;">Antarctica</div><div class="t" style="top:241.95px;height:20px;line-height:20px;font-size:14px;color:#ffffff;letter-spacing:-0.6px;right:464.60px;text-align:right;">7780.00</div><div class="t" style="top:241.95px;height:20px;line-height:20px;font-size:14px;color:#ffffff;letter-spacing:-0.6px;right:234.60px;text-align:right;">0</div><div class="t" style="top:241.95px;height:20px;line-height:20px;font-size:14px;color:#ffffff;letter-spacing:-0.6px;right:15.60px;text-align:right;">0.00</div><svg style="left:13px;top:247.8px" width="8" height="9" viewBox="0 0 8 9"><path d="M0.5 0.5 L7.5 4.5 L0.5 8.5 Z" fill="#090b10" opacity="0.9"/></svg><div class="t" style="top:261.95px;height:20px;line-height:20px;font-size:14px;color:#ffffff;letter-spacing:-1.35px;left:28.60px;">ATG</div><div class="t" style="top:261.95px;height:20px;line-height:20px;font-size:14px;color:#ffffff;letter-spacing:-0.22px;left:100.00px;">Antigua and Barbuda</div><div class="t" style="top:261.95px;height:20px;line-height:20px;font-size:14px;color:#ffffff;letter-spacing:-0.22px;left:337.50px;">North America</div><div class="t" style="top:261.95px;height:20px;line-height:20px;font-size:14px;color:#ffffff;letter-spacing:-0.22px;left:463.00px;">Caribbean</div><div class="t" style="top:261.95px;height:20px;line-height:20px;font-size:14px;color:#ffffff;letter-spacing:-0.6px;right:464.60px;text-align:right;">442.00</div><div class="t" style="top:261.95px;height:20px;line-height:20px;font-size:14px;color:#ffffff;letter-spacing:-0.6px;right:357.80px;text-align:right;">1981</div><div class="t" style="top:261.95px;height:20px;line-height:20px;font-size:14px;color:#ffffff;letter-spacing:-0.6px;right:234.60px;text-align:right;">68000</div><div class="t" style="top:261.95px;height:20px;line-height:20px;font-size:14px;color:#ffffff;letter-spacing:-0.6px;right:111.60px;text-align:right;">70.5</div><div class="t" style="top:261.95px;height:20px;line-height:20px;font-size:14px;color:#ffffff;letter-spacing:-0.6px;right:15.60px;text-align:right;">612.00</div><svg style="left:13px;top:267.8px" width="8" height="9" viewBox="0 0 8 9"><path d="M0.5 0.5 L7.5 4.5 L0.5 8.5 Z" fill="#090b10" opacity="0.9"/></svg><div class="t" style="top:281.95px;height:20px;line-height:20px;font-size:14px;color:#ffffff;letter-spacing:-1.35px;left:28.60px;">AUS</div><div class="t" style="top:281.95px;height:20px;line-height:20px;font-size:14px;color:#ffffff;letter-spacing:-0.22px;left:100.00px;">Australia</div><div class="t" style="top:281.95px;height:20px;line-height:20px;font-size:14px;color:#ffffff;letter-spacing:-0.22px;left:337.50px;">Oceania</div><div class="t" style="top:281.95px;height:20px;line-height:20px;font-size:14px;color:#ffffff;letter-spacing:-0.22px;left:463.00px;">Australia and New Zealand</div><div class="t" style="top:281.95px;height:20px;line-height:20px;font-size:14px;color:#ffffff;letter-spacing:-0.6px;right:464.60px;text-align:right;">7741220.00</div><div class="t" style="top:281.95px;height:20px;line-height:20px;font-size:14px;color:#ffffff;letter-spacing:-0.6px;right:357.80px;text-align:right;">1901</div><div class="t" style="top:281.95px;height:20px;line-height:20px;font-size:14px;color:#ffffff;letter-spacing:-0.6px;right:234.60px;text-align:right;">18886000</div><div class="t" style="top:281.95px;height:20px;line-height:20px;font-size:14px;color:#ffffff;letter-spacing:-0.6px;right:111.60px;text-align:right;">79.8</div><div class="t" style="top:281.95px;height:20px;line-height:20px;font-size:14px;color:#ffffff;letter-spacing:-0.6px;right:15.60px;text-align:right;">351182.00</div><svg style="left:13px;top:287.8px" width="8" height="9" viewBox="0 0 8 9"><path d="M0.5 0.5 L7.5 4.5 L0.5 8.5 Z" fill="#090b10" opacity="0.9"/></svg><div class="t" style="top:301.95px;height:20px;line-height:20px;font-size:14px;color:#ffffff;letter-spacing:-1.35px;left:28.60px;">AUT</div><div class="t" style="top:301.95px;height:20px;line-height:20px;font-size:14px;color:#ffffff;letter-spacing:-0.22px;left:100.00px;">Austria</div><div class="t" style="top:301.95px;height:20px;line-height:20px;font-size:14px;color:#ffffff;letter-spacing:-0.22px;left:337.50px;">Europe</div><div class="t" style="top:301.95px;height:20px;line-height:20px;font-size:14px;color:#ffffff;letter-spacing:-0.22px;left:463.00px;">Western Europe</div><div class="t" style="top:301.95px;height:20px;line-height:20px;font-size:14px;color:#ffffff;letter-spacing:-0.6px;right:464.60px;text-align:right;">83859.00</div><div class="t" style="top:301.95px;height:20px;line-height:20px;font-size:14px;color:#ffffff;letter-spacing:-0.6px;right:357.80px;text-align:right;">1918</div><div class="t" style="top:301.95px;height:20px;line-height:20px;font-size:14px;color:#ffffff;letter-spacing:-0.6px;right:234.60px;text-align:right;">8091800</div><div class="t" style="top:301.95px;height:20px;line-height:20px;font-size:14px;color:#ffffff;letter-spacing:-0.6px;right:111.60px;text-align:right;">77.7</div><div class="t" style="top:301.95px;height:20px;line-height:20px;font-size:14px;color:#ffffff;letter-spacing:-0.6px;right:15.60px;text-align:right;">211860.00</div><svg style="left:13px;top:307.8px" width="8" height="9" viewBox="0 0 8 9"><path d="M0.5 0.5 L7.5 4.5 L0.5 8.5 Z" fill="#090b10" opacity="0.9"/></svg><div class="t" style="top:321.95px;height:20px;line-height:20px;font-size:14px;color:#ffffff;letter-spacing:-1.35px;left:28.60px;">AZE</div><div class="t" style="top:321.95px;height:20px;line-height:20px;font-size:14px;color:#ffffff;letter-spacing:-0.22px;left:100.00px;">Azerbaijan</div><div class="t" style="top:321.95px;height:20px;line-height:20px;font-size:14px;color:#ffffff;letter-spacing:-0.22px;left:337.50px;">Asia</div><div class="t" style="top:321.95px;height:20px;line-height:20px;font-size:14px;color:#ffffff;letter-spacing:-0.22px;left:463.00px;">Middle East</div><div class="t" style="top:321.95px;height:20px;line-height:20px;font-size:14px;color:#ffffff;letter-spacing:-0.6px;right:464.60px;text-align:right;">86600.00</div><div class="t" style="top:321.95px;height:20px;line-height:20px;font-size:14px;color:#ffffff;letter-spacing:-0.6px;right:357.80px;text-align:right;">1991</div><div class="t" style="top:321.95px;height:20px;line-height:20px;font-size:14px;color:#ffffff;letter-spacing:-0.6px;right:234.60px;text-align:right;">7734000</div><div class="t" style="top:321.95px;height:20px;line-height:20px;font-size:14px;color:#ffffff;letter-spacing:-0.6px;right:111.60px;text-align:right;">62.9</div><div class="t" style="top:321.95px;height:20px;line-height:20px;font-size:14px;color:#ffffff;letter-spacing:-0.6px;right:15.60px;text-align:right;">4127.00</div><svg style="left:13px;top:327.8px" width="8" height="9" viewBox="0 0 8 9"><path d="M0.5 0.5 L7.5 4.5 L0.5 8.5 Z" fill="#090b10" opacity="0.9"/></svg><div class="t" style="top:341.95px;height:20px;line-height:20px;font-size:14px;color:#ffffff;letter-spacing:-1.35px;left:28.60px;">BDI</div><div class="t" style="top:341.95px;height:20px;line-height:20px;font-size:14px;color:#ffffff;letter-spacing:-0.22px;left:100.00px;">Burundi</div><div class="t" style="top:341.95px;height:20px;line-height:20px;font-size:14px;color:#ffffff;letter-spacing:-0.22px;left:337.50px;">Africa</div><div class="t" style="top:341.95px;height:20px;line-height:20px;font-size:14px;color:#ffffff;letter-spacing:-0.22px;left:463.00px;">Eastern Africa</div><div class="t" style="top:341.95px;height:20px;line-height:20px;font-size:14px;color:#ffffff;letter-spacing:-0.6px;right:464.60px;text-align:right;">27834.00</div><div class="t" style="top:341.95px;height:20px;line-height:20px;font-size:14px;color:#ffffff;letter-spacing:-0.6px;right:357.80px;text-align:right;">1962</div><div class="t" style="top:341.95px;height:20px;line-height:20px;font-size:14px;color:#ffffff;letter-spacing:-0.6px;right:234.60px;text-align:right;">6695000</div><div class="t" style="top:341.95px;height:20px;line-height:20px;font-size:14px;color:#ffffff;letter-spacing:-0.6px;right:111.60px;text-align:right;">46.2</div><div class="t" style="top:341.95px;height:20px;line-height:20px;font-size:14px;color:#ffffff;letter-spacing:-0.6px;right:15.60px;text-align:right;">903.00</div><svg style="left:13px;top:347.8px" width="8" height="9" viewBox="0 0 8 9"><path d="M0.5 0.5 L7.5 4.5 L0.5 8.5 Z" fill="#090b10" opacity="0.9"/></svg><div class="t" style="top:361.95px;height:20px;line-height:20px;font-size:14px;color:#ffffff;letter-spacing:-1.35px;left:28.60px;">BEL</div><div class="t" style="top:361.95px;height:20px;line-height:20px;font-size:14px;color:#ffffff;letter-spacing:-0.22px;left:100.00px;">Belgium</div><div class="t" style="top:361.95px;height:20px;line-height:20px;font-size:14px;color:#ffffff;letter-spacing:-0.22px;left:337.50px;">Europe</div><div class="t" style="top:361.95px;height:20px;line-height:20px;font-size:14px;color:#ffffff;letter-spacing:-0.22px;left:463.00px;">Western Europe</div><div class="t" style="top:361.95px;height:20px;line-height:20px;font-size:14px;color:#ffffff;letter-spacing:-0.6px;right:464.60px;text-align:right;">30518.00</div><div class="t" style="top:361.95px;height:20px;line-height:20px;font-size:14px;color:#ffffff;letter-spacing:-0.6px;right:357.80px;text-align:right;">1830</div><div class="t" style="top:361.95px;height:20px;line-height:20px;font-size:14px;color:#ffffff;letter-spacing:-0.6px;right:234.60px;text-align:right;">10239000</div><div class="t" style="top:361.95px;height:20px;line-height:20px;font-size:14px;color:#ffffff;letter-spacing:-0.6px;right:111.60px;text-align:right;">77.8</div><div class="t" style="top:361.95px;height:20px;line-height:20px;font-size:14px;color:#ffffff;letter-spacing:-0.6px;right:15.60px;text-align:right;">249704.00</div><svg style="left:13px;top:367.8px" width="8" height="9" viewBox="0 0 8 9"><path d="M0.5 0.5 L7.5 4.5 L0.5 8.5 Z" fill="#090b10" opacity="0.9"/></svg><div class="t" style="top:381.95px;height:20px;line-height:20px;font-size:14px;color:#ffffff;letter-spacing:-1.35px;left:28.60px;">BEN</div><div class="t" style="top:381.95px;height:20px;line-height:20px;font-size:14px;color:#ffffff;letter-spacing:-0.22px;left:100.00px;">Benin</div><div class="t" style="top:381.95px;height:20px;line-height:20px;font-size:14px;color:#ffffff;letter-spacing:-0.22px;left:337.50px;">Africa</div><div class="t" style="top:381.95px;height:20px;line-height:20px;font-size:14px;color:#ffffff;letter-spacing:-0.22px;left:463.00px;">Western Africa</div><div class="t" style="top:381.95px;height:20px;line-height:20px;font-size:14px;color:#ffffff;letter-spacing:-0.6px;right:464.60px;text-align:right;">112622.00</div><div class="t" style="top:381.95px;height:20px;line-height:20px;font-size:14px;color:#ffffff;letter-spacing:-0.6px;right:357.80px;text-align:right;">1960</div><div class="t" style="top:381.95px;height:20px;line-height:20px;font-size:14px;color:#ffffff;letter-spacing:-0.6px;right:234.60px;text-align:right;">6097000</div><div class="t" style="top:381.95px;height:20px;line-height:20px;font-size:14px;color:#ffffff;letter-spacing:-0.6px;right:111.60px;text-align:right;">50.2</div><div class="t" style="top:381.95px;height:20px;line-height:20px;font-size:14px;color:#ffffff;letter-spacing:-0.6px;right:15.60px;text-align:right;">2357.00</div><svg style="left:13px;top:387.8px" width="8" height="9" viewBox="0 0 8 9"><path d="M0.5 0.5 L7.5 4.5 L0.5 8.5 Z" fill="#090b10" opacity="0.9"/></svg><div class="t" style="top:401.95px;height:20px;line-height:20px;font-size:14px;color:#ffffff;letter-spacing:-1.35px;left:28.60px;">BFA</div><div class="t" style="top:401.95px;height:20px;line-height:20px;font-size:14px;color:#ffffff;letter-spacing:-0.22px;left:100.00px;">Burkina Faso</div><div class="t" style="top:401.95px;height:20px;line-height:20px;font-size:14px;color:#ffffff;letter-spacing:-0.22px;left:337.50px;">Africa</div><div class="t" style="top:401.95px;height:20px;line-height:20px;font-size:14px;color:#ffffff;letter-spacing:-0.22px;left:463.00px;">Western Africa</div><div class="t" style="top:401.95px;height:20px;line-height:20px;font-size:14px;color:#ffffff;letter-spacing:-0.6px;right:464.60px;text-align:right;">274000.00</div><div class="t" style="top:401.95px;height:20px;line-height:20px;font-size:14px;color:#ffffff;letter-spacing:-0.6px;right:357.80px;text-align:right;">1960</div><div class="t" style="top:401.95px;height:20px;line-height:20px;font-size:14px;color:#ffffff;letter-spacing:-0.6px;right:234.60px;text-align:right;">11937000</div><div class="t" style="top:401.95px;height:20px;line-height:20px;font-size:14px;color:#ffffff;letter-spacing:-0.6px;right:111.60px;text-align:right;">46.7</div><div class="t" style="top:401.95px;height:20px;line-height:20px;font-size:14px;color:#ffffff;letter-spacing:-0.6px;right:15.60px;text-align:right;">2425.00</div><svg style="left:13px;top:407.8px" width="8" height="9" viewBox="0 0 8 9"><path d="M0.5 0.5 L7.5 4.5 L0.5 8.5 Z" fill="#090b10" opacity="0.9"/></svg><div class="t" style="top:421.95px;height:20px;line-height:20px;font-size:14px;color:#ffffff;letter-spacing:-1.35px;left:28.60px;">BGD</div><div class="t" style="top:421.95px;height:20px;line-height:20px;font-size:14px;color:#ffffff;letter-spacing:-0.22px;left:100.00px;">Bangladesh</div><div class="t" style="top:421.95px;height:20px;line-height:20px;font-size:14px;color:#ffffff;letter-spacing:-0.22px;left:337.50px;">Asia</div><div class="t" style="top:421.95px;height:20px;line-height:20px;font-size:14px;color:#ffffff;letter-spacing:-0.22px;left:463.00px;">Southern and Central Asia</div><div class="t" style="top:421.95px;height:20px;line-height:20px;font-size:14px;color:#ffffff;letter-spacing:-0.6px;right:464.60px;text-align:right;">143998.00</div><div class="t" style="top:421.95px;height:20px;line-height:20px;font-size:14px;color:#ffffff;letter-spacing:-0.6px;right:357.80px;text-align:right;">1971</div><div class="t" style="top:421.95px;height:20px;line-height:20px;font-size:14px;color:#ffffff;letter-spacing:-0.6px;right:234.60px;text-align:right;">129155000</div><div class="t" style="top:421.95px;height:20px;line-height:20px;font-size:14px;color:#ffffff;letter-spacing:-0.6px;right:111.60px;text-align:right;">60.2</div><div class="t" style="top:421.95px;height:20px;line-height:20px;font-size:14px;color:#ffffff;letter-spacing:-0.6px;right:15.60px;text-align:right;">32852.00</div><svg style="left:13px;top:427.8px" width="8" height="9" viewBox="0 0 8 9"><path d="M0.5 0.5 L7.5 4.5 L0.5 8.5 Z" fill="#090b10" opacity="0.9"/></svg><div class="t" style="top:441.95px;height:20px;line-height:20px;font-size:14px;color:#ffffff;letter-spacing:-1.35px;left:28.60px;">BGR</div><div class="t" style="top:441.95px;height:20px;line-height:20px;font-size:14px;color:#ffffff;letter-spacing:-0.22px;left:100.00px;">Bulgaria</div><div class="t" style="top:441.95px;height:20px;line-height:20px;font-size:14px;color:#ffffff;letter-spacing:-0.22px;left:337.50px;">Europe</div><div class="t" style="top:441.95px;height:20px;line-height:20px;font-size:14px;color:#ffffff;letter-spacing:-0.22px;left:463.00px;">Eastern Europe</div><div class="t" style="top:441.95px;height:20px;line-height:20px;font-size:14px;color:#ffffff;letter-spacing:-0.6px;right:464.60px;text-align:right;">110994.00</div><div class="t" style="top:441.95px;height:20px;line-height:20px;font-size:14px;color:#ffffff;letter-spacing:-0.6px;right:357.80px;text-align:right;">1908</div><div class="t" style="top:441.95px;height:20px;line-height:20px;font-size:14px;color:#ffffff;letter-spacing:-0.6px;right:234.60px;text-align:right;">8190900</div><div class="t" style="top:441.95px;height:20px;line-height:20px;font-size:14px;color:#ffffff;letter-spacing:-0.6px;right:111.60px;text-align:right;">70.9</div><div class="t" style="top:441.95px;height:20px;line-height:20px;font-size:14px;color:#ffffff;letter-spacing:-0.6px;right:15.60px;text-align:right;">12178.00</div><svg style="left:13px;top:447.8px" width="8" height="9" viewBox="0 0 8 9"><path d="M0.5 0.5 L7.5 4.5 L0.5 8.5 Z" fill="#090b10" opacity="0.9"/></svg><div class="t" style="top:461.95px;height:20px;line-height:20px;font-size:14px;color:#ffffff;letter-spacing:-1.35px;left:28.60px;">BHR</div><div class="t" style="top:461.95px;height:20px;line-height:20px;font-size:14px;color:#ffffff;letter-spacing:-0.22px;left:100.00px;">Bahrain</div><div class="t" style="top:461.95px;height:20px;line-height:20px;font-size:14px;color:#ffffff;letter-spacing:-0.22px;left:337.50px;">Asia</div><div class="t" style="top:461.95px;height:20px;line-height:20px;font-size:14px;color:#ffffff;letter-spacing:-0.22px;left:463.00px;">Middle East</div><div class="t" style="top:461.95px;height:20px;line-height:20px;font-size:14px;color:#ffffff;letter-spacing:-0.6px;right:464.60px;text-align:right;">694.00</div><div class="t" style="top:461.95px;height:20px;line-height:20px;font-size:14px;color:#ffffff;letter-spacing:-0.6px;right:357.80px;text-align:right;">1971</div><div class="t" style="top:461.95px;height:20px;line-height:20px;font-size:14px;color:#ffffff;letter-spacing:-0.6px;right:234.60px;text-align:right;">617000</div><div class="t" style="top:461.95px;height:20px;line-height:20px;font-size:14px;color:#ffffff;letter-spacing:-0.6px;right:111.60px;text-align:right;">73.0</div><div class="t" style="top:461.95px;height:20px;line-height:20px;font-size:14px;color:#ffffff;letter-spacing:-0.6px;right:15.60px;text-align:right;">6366.00</div><svg style="left:13px;top:467.8px" width="8" height="9" viewBox="0 0 8 9"><path d="M0.5 0.5 L7.5 4.5 L0.5 8.5 Z" fill="#090b10" opacity="0.9"/></svg><div class="t" style="top:481.95px;height:20px;line-height:20px;font-size:14px;color:#ffffff;letter-spacing:-1.35px;left:28.60px;">BHS</div><div class="t" style="top:481.95px;height:20px;line-height:20px;font-size:14px;color:#ffffff;letter-spacing:-0.22px;left:100.00px;">Bahamas</div><div class="t" style="top:481.95px;height:20px;line-height:20px;font-size:14px;color:#ffffff;letter-spacing:-0.22px;left:337.50px;">North America</div><div class="t" style="top:481.95px;height:20px;line-height:20px;font-size:14px;color:#ffffff;letter-spacing:-0.22px;left:463.00px;">Caribbean</div><div class="t" style="top:481.95px;height:20px;line-height:20px;font-size:14px;color:#ffffff;letter-spacing:-0.6px;right:464.60px;text-align:right;">13878.00</div><div class="t" style="top:481.95px;height:20px;line-height:20px;font-size:14px;color:#ffffff;letter-spacing:-0.6px;right:357.80px;text-align:right;">1973</div><div class="t" style="top:481.95px;height:20px;line-height:20px;font-size:14px;color:#ffffff;letter-spacing:-0.6px;right:234.60px;text-align:right;">307000</div><div class="t" style="top:481.95px;height:20px;line-height:20px;font-size:14px;color:#ffffff;letter-spacing:-0.6px;right:111.60px;text-align:right;">71.1</div><div class="t" style="top:481.95px;height:20px;line-height:20px;font-size:14px;color:#ffffff;letter-spacing:-0.6px;right:15.60px;text-align:right;">3527.00</div><svg style="left:13px;top:487.8px" width="8" height="9" viewBox="0 0 8 9"><path d="M0.5 0.5 L7.5 4.5 L0.5 8.5 Z" fill="#090b10" opacity="0.9"/></svg><div class="t" style="top:501.95px;height:20px;line-height:20px;font-size:14px;color:#ffffff;letter-spacing:-1.35px;left:28.60px;">BIH</div><div class="t" style="top:501.95px;height:20px;line-height:20px;font-size:14px;color:#ffffff;letter-spacing:-0.22px;left:100.00px;">Bosnia and Herzegovina</div><div class="t" style="top:501.95px;height:20px;line-height:20px;font-size:14px;color:#ffffff;letter-spacing:-0.22px;left:337.50px;">Europe</div><div class="t" style="top:501.95px;height:20px;line-height:20px;font-size:14px;color:#ffffff;letter-spacing:-0.22px;left:463.00px;">Southern Europe</div><div class="t" style="top:501.95px;height:20px;line-height:20px;font-size:14px;color:#ffffff;letter-spacing:-0.6px;right:464.60px;text-align:right;">51197.00</div><div class="t" style="top:501.95px;height:20px;line-height:20px;font-size:14px;color:#ffffff;letter-spacing:-0.6px;right:357.80px;text-align:right;">1992</div><div class="t" style="top:501.95px;height:20px;line-height:20px;font-size:14px;color:#ffffff;letter-spacing:-0.6px;right:234.60px;text-align:right;">3972000</div><div class="t" style="top:501.95px;height:20px;line-height:20px;font-size:14px;color:#ffffff;letter-spacing:-0.6px;right:111.60px;text-align:right;">71.5</div><div class="t" style="top:501.95px;height:20px;line-height:20px;font-size:14px;color:#ffffff;letter-spacing:-0.6px;right:15.60px;text-align:right;">2841.00</div><svg style="left:13px;top:507.8px" width="8" height="9" viewBox="0 0 8 9"><path d="M0.5 0.5 L7.5 4.5 L0.5 8.5 Z" fill="#090b10" opacity="0.9"/></svg><div class="t" style="top:521.95px;height:20px;line-height:20px;font-size:14px;color:#ffffff;letter-spacing:-1.35px;left:28.60px;">BLR</div><div class="t" style="top:521.95px;height:20px;line-height:20px;font-size:14px;color:#ffffff;letter-spacing:-0.22px;left:100.00px;">Belarus</div><div class="t" style="top:521.95px;height:20px;line-height:20px;font-size:14px;color:#ffffff;letter-spacing:-0.22px;left:337.50px;">Europe</div><div class="t" style="top:521.95px;height:20px;line-height:20px;font-size:14px;color:#ffffff;letter-spacing:-0.22px;left:463.00px;">Eastern Europe</div><div class="t" style="top:521.95px;height:20px;line-height:20px;font-size:14px;color:#ffffff;letter-spacing:-0.6px;right:464.60px;text-align:right;">207600.00</div><div class="t" style="top:521.95px;height:20px;line-height:20px;font-size:14px;color:#ffffff;letter-spacing:-0.6px;right:357.80px;text-align:right;">1991</div><div class="t" style="top:521.95px;height:20px;line-height:20px;font-size:14px;color:#ffffff;letter-spacing:-0.6px;right:234.60px;text-align:right;">10236000</div><div class="t" style="top:521.95px;height:20px;line-height:20px;font-size:14px;color:#ffffff;letter-spacing:-0.6px;right:111.60px;text-align:right;">68.0</div><div class="t" style="top:521.95px;height:20px;line-height:20px;font-size:14px;color:#ffffff;letter-spacing:-0.6px;right:15.60px;text-align:right;">13714.00</div><svg style="left:13px;top:527.8px" width="8" height="9" viewBox="0 0 8 9"><path d="M0.5 0.5 L7.5 4.5 L0.5 8.5 Z" fill="#090b10" opacity="0.9"/></svg><div class="t" style="top:541.95px;height:20px;line-height:20px;font-size:14px;color:#ffffff;letter-spacing:-1.35px;left:28.60px;">BLZ</div><div class="t" style="top:541.95px;height:20px;line-height:20px;font-size:14px;color:#ffffff;letter-spacing:-0.22px;left:100.00px;">Belize</div><div class="t" style="top:541.95px;height:20px;line-height:20px;font-size:14px;color:#ffffff;letter-spacing:-0.22px;left:337.50px;">North America</div><div class="t" style="top:541.95px;height:20px;line-height:20px;font-size:14px;color:#ffffff;letter-spacing:-0.22px;left:463.00px;">Central America</div><div class="t" style="top:541.95px;height:20px;line-height:20px;font-size:14px;color:#ffffff;letter-spacing:-0.6px;right:464.60px;text-align:right;">22696.00</div><div class="t" style="top:541.95px;height:20px;line-height:20px;font-size:14px;color:#ffffff;letter-spacing:-0.6px;right:357.80px;text-align:right;">1981</div><div class="t" style="top:541.95px;height:20px;line-height:20px;font-size:14px;color:#ffffff;letter-spacing:-0.6px;right:234.60px;text-align:right;">241000</div><div class="t" style="top:541.95px;height:20px;line-height:20px;font-size:14px;color:#ffffff;letter-spacing:-0.6px;right:111.60px;text-align:right;">70.9</div><div class="t" style="top:541.95px;height:20px;line-height:20px;font-size:14px;color:#ffffff;letter-spacing:-0.6px;right:15.60px;text-align:right;">630.00</div><svg style="left:13px;top:547.8px" width="8" height="9" viewBox="0 0 8 9"><path d="M0.5 0.5 L7.5 4.5 L0.5 8.5 Z" fill="#090b10" opacity="0.9"/></svg><div class="t" style="top:561.95px;height:20px;line-height:20px;font-size:14px;color:#ffffff;letter-spacing:-1.35px;left:28.60px;">BMU</div><div class="t" style="top:561.95px;height:20px;line-height:20px;font-size:14px;color:#ffffff;letter-spacing:-0.22px;left:100.00px;">Bermuda</div><div class="t" style="top:561.95px;height:20px;line-height:20px;font-size:14px;color:#ffffff;letter-spacing:-0.22px;left:337.50px;">North America</div><div class="t" style="top:561.95px;height:20px;line-height:20px;font-size:14px;color:#ffffff;letter-spacing:-0.22px;left:463.00px;">North America</div><div class="t" style="top:561.95px;height:20px;line-height:20px;font-size:14px;color:#ffffff;letter-spacing:-0.6px;right:464.60px;text-align:right;">53.00</div><div class="t" style="top:561.95px;height:20px;line-height:20px;font-size:14px;color:#ffffff;letter-spacing:-0.6px;right:234.60px;text-align:right;">65000</div><div class="t" style="top:561.95px;height:20px;line-height:20px;font-size:14px;color:#ffffff;letter-spacing:-0.6px;right:111.60px;text-align:right;">76.9</div><div class="t" style="top:561.95px;height:20px;line-height:20px;font-size:14px;color:#ffffff;letter-spacing:-0.6px;right:15.60px;text-align:right;">2328.00</div><svg style="left:13px;top:567.8px" width="8" height="9" viewBox="0 0 8 9"><path d="M0.5 0.5 L7.5 4.5 L0.5 8.5 Z" fill="#090b10" opacity="0.9"/></svg><div class="t" style="top:581.95px;height:20px;line-height:20px;font-size:14px;color:#ffffff;letter-spacing:-1.35px;left:28.60px;">BOL</div><div class="t" style="top:581.95px;height:20px;line-height:20px;font-size:14px;color:#ffffff;letter-spacing:-0.22px;left:100.00px;">Bolivia</div><div class="t" style="top:581.95px;height:20px;line-height:20px;font-size:14px;color:#ffffff;letter-spacing:-0.22px;left:337.50px;">South America</div><div class="t" style="top:581.95px;height:20px;line-height:20px;font-size:14px;color:#ffffff;letter-spacing:-0.22px;left:463.00px;">South America</div><div class="t" style="top:581.95px;height:20px;line-height:20px;font-size:14px;color:#ffffff;letter-spacing:-0.6px;right:464.60px;text-align:right;">1098581.00</div><div class="t" style="top:581.95px;height:20px;line-height:20px;font-size:14px;color:#ffffff;letter-spacing:-0.6px;right:357.80px;text-align:right;">1825</div><div class="t" style="top:581.95px;height:20px;line-height:20px;font-size:14px;color:#ffffff;letter-spacing:-0.6px;right:234.60px;text-align:right;">8329000</div><div class="t" style="top:581.95px;height:20px;line-height:20px;font-size:14px;color:#ffffff;letter-spacing:-0.6px;right:111.60px;text-align:right;">63.7</div><div class="t" style="top:581.95px;height:20px;line-height:20px;font-size:14px;color:#ffffff;letter-spacing:-0.6px;right:15.60px;text-align:right;">8571.00</div><svg style="left:13px;top:587.8px" width="8" height="9" viewBox="0 0 8 9"><path d="M0.5 0.5 L7.5 4.5 L0.5 8.5 Z" fill="#090b10" opacity="0.9"/></svg><div class="t" style="top:601.95px;height:20px;line-height:20px;font-size:14px;color:#ffffff;letter-spacing:-1.35px;left:28.60px;">BRA</div><div class="t" style="top:601.95px;height:20px;line-height:20px;font-size:14px;color:#ffffff;letter-spacing:-0.22px;left:100.00px;">Brazil</div><div class="t" style="top:601.95px;height:20px;line-height:20px;font-size:14px;color:#ffffff;letter-spacing:-0.22px;left:337.50px;">South America</div><div class="t" style="top:601.95px;height:20px;line-height:20px;font-size:14px;color:#ffffff;letter-spacing:-0.22px;left:463.00px;">South America</div><div class="t" style="top:601.95px;height:20px;line-height:20px;font-size:14px;color:#ffffff;letter-spacing:-0.6px;right:464.60px;text-align:right;">8547403.00</div><div class="t" style="top:601.95px;height:20px;line-height:20px;font-size:14px;color:#ffffff;letter-spacing:-0.6px;right:357.80px;text-align:right;">1822</div><div class="t" style="top:601.95px;height:20px;line-height:20px;font-size:14px;color:#ffffff;letter-spacing:-0.6px;right:234.60px;text-align:right;">170115000</div><div class="t" style="top:601.95px;height:20px;line-height:20px;font-size:14px;color:#ffffff;letter-spacing:-0.6px;right:111.60px;text-align:right;">62.9</div><div class="t" style="top:601.95px;height:20px;line-height:20px;font-size:14px;color:#ffffff;letter-spacing:-0.6px;right:15.60px;text-align:right;">776739.00</div><svg style="left:13px;top:607.8px" width="8" height="9" viewBox="0 0 8 9"><path d="M0.5 0.5 L7.5 4.5 L0.5 8.5 Z" fill="#090b10" opacity="0.9"/></svg><div class="t" style="top:621.95px;height:20px;line-height:20px;font-size:14px;color:#ffffff;letter-spacing:-1.35px;left:28.60px;">BRB</div><div class="t" style="top:621.95px;height:20px;line-height:20px;font-size:14px;color:#ffffff;letter-spacing:-0.22px;left:100.00px;">Barbados</div><div class="t" style="top:621.95px;height:20px;line-height:20px;font-size:14px;color:#ffffff;letter-spacing:-0.22px;left:337.50px;">North America</div><div class="t" style="top:621.95px;height:20px;line-height:20px;font-size:14px;color:#ffffff;letter-spacing:-0.22px;left:463.00px;">Caribbean</div><div class="t" style="top:621.95px;height:20px;line-height:20px;font-size:14px;color:#ffffff;letter-spacing:-0.6px;right:464.60px;text-align:right;">430.00</div><div class="t" style="top:621.95px;height:20px;line-height:20px;font-size:14px;color:#ffffff;letter-spacing:-0.6px;right:357.80px;text-align:right;">1966</div><div class="t" style="top:621.95px;height:20px;line-height:20px;font-size:14px;color:#ffffff;letter-spacing:-0.6px;right:234.60px;text-align:right;">270000</div><div class="t" style="top:621.95px;height:20px;line-height:20px;font-size:14px;color:#ffffff;letter-spacing:-0.6px;right:111.60px;text-align:right;">73.0</div><div class="t" style="top:621.95px;height:20px;line-height:20px;font-size:14px;color:#ffffff;letter-spacing:-0.6px;right:15.60px;text-align:right;">2223.00</div><svg style="left:13px;top:627.8px" width="8" height="9" viewBox="0 0 8 9"><path d="M0.5 0.5 L7.5 4.5 L0.5 8.5 Z" fill="#090b10" opacity="0.9"/></svg>
</div>
<div class="b" style="left:1215px;top:620px;width:15.3px;height:652px;background:#fcfcfc;"></div>
<div class="b" style="left:9.5px;top:1257px;width:1220.8px;height:15px;background:#fcfcfc;"></div>
<svg style="left:1215px;top:620px" width="16" height="652" viewBox="0 0 16 652"><path d="M3 12.7 L7.5 6.3 L12 12.7 Z" fill="#9a9a9a"/><rect x="3.5" y="20" width="8" height="190" rx="4" fill="#909090"/><path d="M3 624.5 L7.5 631 L12 624.5 Z" fill="#9a9a9a"/></svg>
<svg style="left:9.5px;top:1257px" width="1206" height="15" viewBox="0 0 1206 15"><path d="M8.7 3 L2.3 7.5 L8.7 12 Z" fill="#9a9a9a"/><rect x="17.5" y="3.5" width="926" height="8" rx="4" fill="#909090"/><path d="M1193 3 L1199.4 7.5 L1193 12 Z" fill="#9a9a9a"/></svg>
<div class="b" style="left:9.7px;top:1285.3px;width:44.3px;height:30px;background:linear-gradient(180deg,#2c3038,#1e2129);border:1px solid #1a1c22;border-radius:2px;"></div>
<div class="t" style="top:1294.21px;height:15px;line-height:15px;font-size:11.8px;color:#ffffff;left:-267.50px;width:600px;text-align:center;letter-spacing:-0.9px;">CSV</div>
<div class="b" style="left:1050px;top:1286.5px;width:35px;height:32px;background:linear-gradient(180deg,#282c34,#1e2128);border:1px solid #16181d;border-radius:2px;"></div>
<div class="t" style="top:1294.49px;height:17px;line-height:17px;font-size:13px;color:#1b1e25;left:696.70px;width:600px;text-align:center;">«</div>
<div class="t" style="top:1294.49px;height:17px;line-height:17px;font-size:13px;color:#1b1e25;left:732.20px;width:600px;text-align:center;">‹</div>
<div class="t" style="top:1294.49px;height:17px;line-height:17px;font-size:13px;color:#fff;left:767.90px;width:600px;text-align:center;">1</div>
<div class="t" style="top:1294.49px;height:17px;line-height:17px;font-size:13px;color:#fff;left:804.90px;width:600px;text-align:center;">2</div>
<div class="t" style="top:1294.49px;height:17px;line-height:17px;font-size:13px;color:#fff;left:842.00px;width:600px;text-align:center;">3</div>
<div class="t" style="top:1294.49px;height:17px;line-height:17px;font-size:13px;color:#fff;left:877.50px;width:600px;text-align:center;">›</div>
<div class="t" style="top:1294.49px;height:17px;line-height:17px;font-size:13px;color:#fff;left:912.30px;width:600px;text-align:center;">»</div>
<div class="b" style="left:1px;top:1337px;width:1237px;height:50px;background:#252932;"></div>
<div class="b" style="left:1px;top:1387px;width:1237px;height:3px;background:#1d2026;"></div>
<svg style="left:1142px;top:1357px" width="14" height="14" viewBox="0 0 14 14"><path d="M7 0.6 L13.6 6.6 L11.8 6.6 L11.8 13.4 L2.2 13.4 L2.2 6.6 L0.4 6.6 Z" fill="#9bdcdf" stroke="#9bdcdf" stroke-width="0.6" stroke-linejoin="round"/><rect x="5.4" y="8.8" width="2.8" height="3.2" fill="#1d2530"/></svg>
<div class="t" style="top:1355.48px;height:18px;line-height:18px;font-size:13.6px;color:#e6e6e6;left:1160.00px;">Home</div>
</body></html>
